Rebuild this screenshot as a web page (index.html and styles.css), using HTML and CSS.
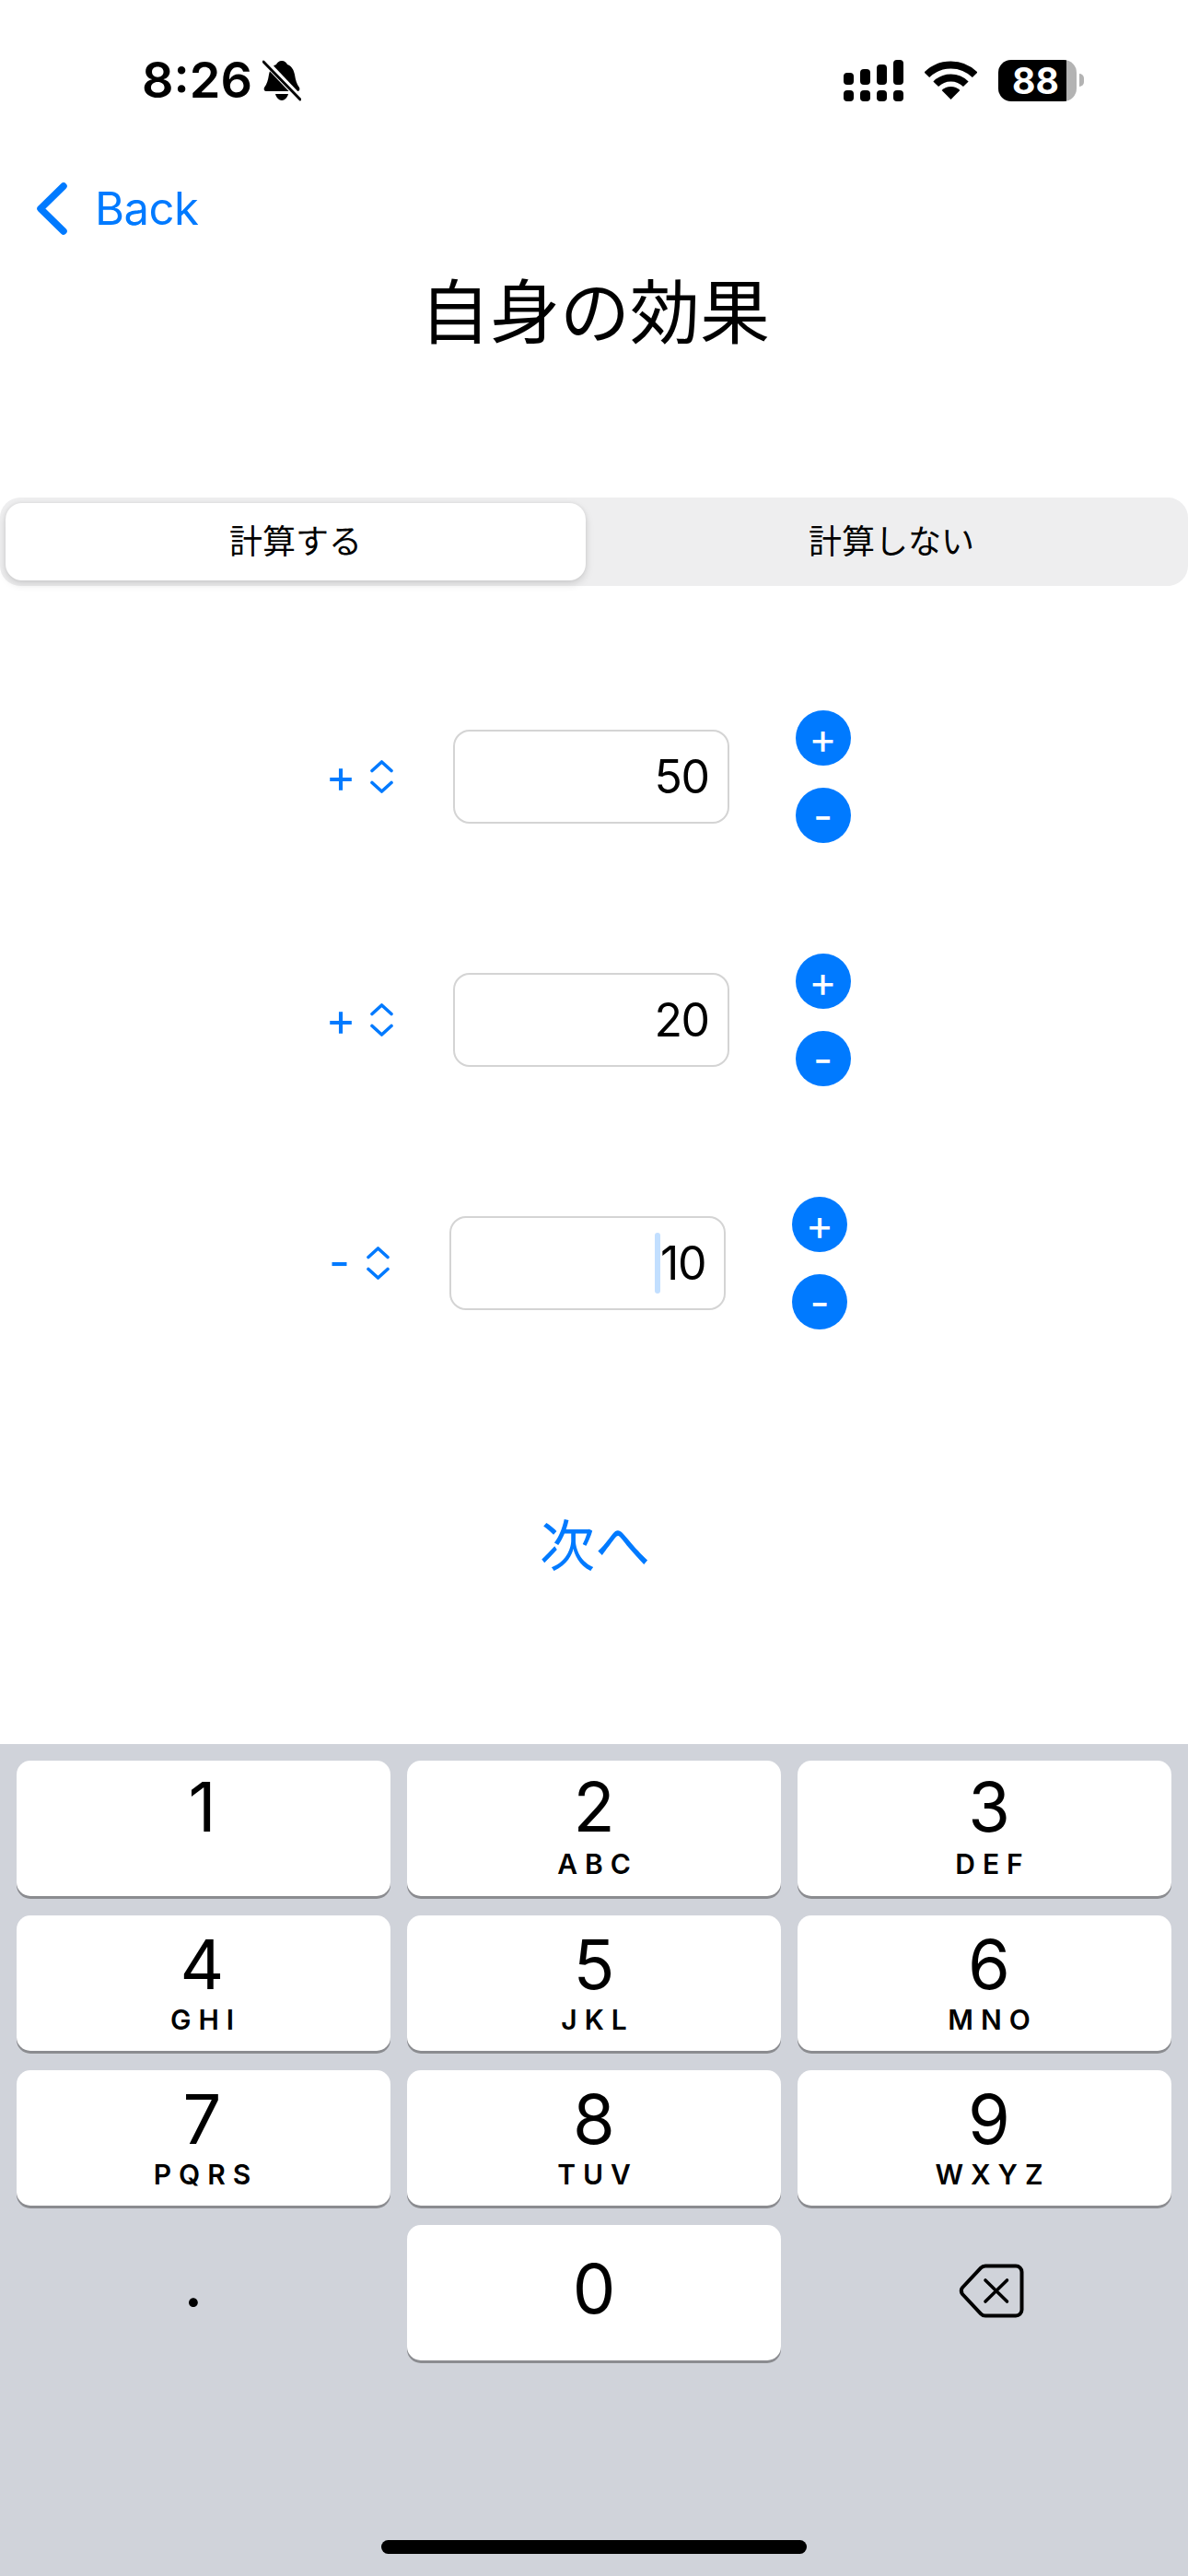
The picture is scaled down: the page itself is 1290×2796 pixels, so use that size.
FILE: index.html
```html
<!DOCTYPE html>
<html>

	<head lang="ja">
		<meta charset="UTF-8">
		<title>自身の効果</title>
		<link rel="stylesheet" href="styles.css">
	</head>

	<body>
		<div class="page">
			<div class="status">
				<div class="status-left">
					<span class="time">8:26</span>
					<svg class="bell" width="42" height="45" viewBox="0 0 42 45">
						<path d="M21 1c3 0 5 2 6 4 5 2 7 6 8 11 1 6 2 10 5 14 1 2 0 4-2 4H4c-2 0-3-2-2-4 3-4 4-8 5-14 1-5 3-9 8-11 1-2 3-4 6-4z" fill="#000"/>
						<path d="M14 37h14c-1 4-4 7-7 7s-6-3-7-7z" fill="#000"/>
						<path d="M1 0l41 43" stroke="#fff" stroke-width="7" fill="none"/>
						<path d="M1 2l40 41" stroke="#000" stroke-width="3" stroke-linecap="round" fill="none"/>
					</svg>
				</div>
				<div class="status-right">
					<svg width="65" height="45" viewBox="0 0 65 45">
						<rect x="0" y="14" width="11" height="13" rx="4"/>
						<rect x="18" y="10" width="11" height="17" rx="4"/>
						<rect x="36" y="5" width="11" height="22" rx="4"/>
						<rect x="54" y="0" width="11" height="27" rx="4"/>
						<rect x="0" y="33" width="11" height="12" rx="4"/>
						<rect x="18" y="33" width="11" height="12" rx="4"/>
						<rect x="36" y="33" width="11" height="12" rx="4"/>
						<rect x="54" y="33" width="11" height="12" rx="4"/>
					</svg>
					<svg class="wifi" width="57" height="43" viewBox="0 0 57 43">
						<path d="M2.3 15.3A37 37 0 0 1 54.7 15.3" stroke="#000" stroke-width="8" fill="none"/>
						<path d="M12.2 25.2A23 23 0 0 1 44.8 25.2" stroke="#000" stroke-width="8" fill="none"/>
						<path d="M28.5 42L18.6 32A14 14 0 0 1 38.4 32Z" fill="#000"/>
					</svg>
					<div class="battery">88</div>
					<div class="battery-nub"></div>
				</div>
			</div>

			<div class="nav">
				<svg width="33" height="57" viewBox="0 0 33 57">
					<path d="M29 4L4 28.5 29 53" stroke="#007aff" stroke-width="7.5" stroke-linecap="round" stroke-linejoin="round" fill="none"/>
				</svg>
				<span class="back">Back</span>
			</div>

			<div class="title">自身の効果</div>

			<div class="segment">
				<div class="seg-item seg-active">計算する</div>
				<div class="seg-item seg-other">計算しない</div>
			</div>

			<div class="rows">
				<div class="row">
					<span class="sign">+</span>
					<svg class="updown" width="25" height="36" viewBox="0 0 25 36">
						<path d="M2 11.5L12.5 2 23 11.5M2 24.5L12.5 34 23 24.5" stroke="#007aff" stroke-width="3.6" stroke-linecap="round" stroke-linejoin="round" fill="none"/>
					</svg>
					<div class="field"><span class="field-val">50</span></div>
					<div class="steppers">
						<div class="stepper">+</div>
						<div class="stepper">-</div>
					</div>
				</div>
				<div class="row">
					<span class="sign">+</span>
					<svg class="updown" width="25" height="36" viewBox="0 0 25 36">
						<path d="M2 11.5L12.5 2 23 11.5M2 24.5L12.5 34 23 24.5" stroke="#007aff" stroke-width="3.6" stroke-linecap="round" stroke-linejoin="round" fill="none"/>
					</svg>
					<div class="field"><span class="field-val">20</span></div>
					<div class="steppers">
						<div class="stepper">+</div>
						<div class="stepper">-</div>
					</div>
				</div>
				<div class="row">
					<span class="sign sign-minus">-</span>
					<svg class="updown" width="25" height="36" viewBox="0 0 25 36">
						<path d="M2 11.5L12.5 2 23 11.5M2 24.5L12.5 34 23 24.5" stroke="#007aff" stroke-width="3.6" stroke-linecap="round" stroke-linejoin="round" fill="none"/>
					</svg>
					<div class="field"><span class="caret"></span><span class="field-val">10</span></div>
					<div class="steppers">
						<div class="stepper">+</div>
						<div class="stepper">-</div>
					</div>
				</div>
			</div>

			<div class="next">次へ</div>

			<div class="keyboard">
				<div class="keys">
					<div class="key"><span class="num">1</span></div>
					<div class="key"><span class="num">2</span><span class="sub">ABC</span></div>
					<div class="key"><span class="num">3</span><span class="sub">DEF</span></div>
					<div class="key"><span class="num">4</span><span class="sub">GHI</span></div>
					<div class="key"><span class="num">5</span><span class="sub">JKL</span></div>
					<div class="key"><span class="num">6</span><span class="sub">MNO</span></div>
					<div class="key"><span class="num">7</span><span class="sub">PQRS</span></div>
					<div class="key"><span class="num">8</span><span class="sub">TUV</span></div>
					<div class="key"><span class="num">9</span><span class="sub">WXYZ</span></div>
					<div class="key key-plain key-dot"><span class="num">.</span></div>
					<div class="key key-zero"><span class="num">0</span></div>
					<div class="key key-plain key-del">
						<svg width="71" height="59" viewBox="0 0 71 59">
							<path d="M29 2.5H62a6.5 6.5 0 0 1 6.5 6.5V50a6.5 6.5 0 0 1-6.5 6.5H29a7 7 0 0 1-5-2.2L4 33a5.5 5.5 0 0 1 0-7L24 4.7a7 7 0 0 1 5-2.2z" stroke="#000" stroke-width="4" stroke-linejoin="round" fill="none"/>
							<path d="M29 18l23.5 23M52.5 18L29 41" stroke="#000" stroke-width="3.6" stroke-linecap="round" fill="none"/>
						</svg>
					</div>
				</div>
				<div class="home"></div>
			</div>
		</div>
	</body>

</html>
```
FILE: styles.css
```css
* {
	margin: 0;
	padding: 0;
	box-sizing: border-box;
}

body {
	background: #fff;
	font-family: Inter, "Noto Sans CJK JP", sans-serif;
	color: #000;
}

.page {
	width: 1290px;
	height: 2796px;
	display: flex;
	flex-direction: column;
	overflow: hidden;
}

.status {
	display: flex;
	justify-content: space-between;
	align-items: center;
	padding: 64px 113px 0 154px;
}

.status-left {
	display: flex;
	align-items: center;
	gap: 11px;
	height: 46px;
}

.time {
	font-size: 54px;
	font-weight: 600;
	line-height: 46px;
}

.status-right {
	display: flex;
	align-items: center;
	height: 46px;
}

.wifi {
	margin-left: 23px;
}

.battery {
	width: 85px;
	height: 45px;
	margin-left: 23px;
	padding-left: 15px;
	border-radius: 14px;
	background: linear-gradient(to right, #000 74px, #b3b3b3 74px);
	color: #fff;
	font-size: 39px;
	font-weight: 700;
	line-height: 45px;
}

.battery-nub {
	width: 5px;
	height: 14px;
	margin-left: 3px;
	border-radius: 0 7px 7px 0;
	background: #b3b3b3;
}

.nav {
	display: flex;
	align-items: center;
	gap: 30px;
	height: 57px;
	margin-top: 88px;
	padding-left: 40px;
}

.back {
	font-size: 49px;
	color: #007aff;
	line-height: 57px;
	letter-spacing: -0.5px;
}

.title {
	margin-top: 36px;
	font-size: 76px;
	line-height: 96px;
	text-align: center;
	padding-left: 2px;
}

.segment {
	display: flex;
	height: 96px;
	margin-top: 153px;
	padding: 6px;
	border-radius: 22px;
	background: #eeeeef;
}

.seg-item {
	font-size: 36px;
	line-height: 84px;
	text-align: center;
}

.seg-active {
	width: 630px;
	border-radius: 18px;
	background: #fff;
	box-shadow: 0 4px 10px rgba(0, 0, 0, 0.13), 0 0 4px rgba(0, 0, 0, 0.07);
}

.seg-other {
	flex: 1;
	padding-left: 16px;
}

.rows {
	display: flex;
	flex-direction: column;
	gap: 120px;
	margin-top: 135px;
}

.row {
	display: flex;
	align-items: center;
	justify-content: center;
	height: 144px;
	padding-right: 13px;
}

.sign {
	font-size: 50px;
	line-height: 60px;
	color: #007aff;
	margin-right: 15px;
	margin-bottom: 2px;
}

.sign-minus {
	padding-right: 3px;
}

.field {
	display: flex;
	align-items: center;
	justify-content: flex-end;
	width: 300px;
	height: 102px;
	margin-left: 65px;
	padding-right: 20px;
	border: 2px solid #d4d4d4;
	border-radius: 18px;
	background: #fff;
}

.field-val {
	font-size: 50px;
	line-height: 60px;
	letter-spacing: -1.5px;
}

.caret {
	width: 6px;
	height: 66px;
	border-radius: 3px;
	background: #c2dfff;
}

.steppers {
	display: flex;
	flex-direction: column;
	gap: 24px;
	margin-left: 72px;
}

.stepper {
	width: 60px;
	height: 60px;
	border-radius: 50%;
	background: #007aff;
	color: #fff;
	font-size: 46px;
	line-height: 60px;
	text-align: center;
}

.next {
	margin-top: 195px;
	font-size: 60px;
	line-height: 80px;
	text-align: center;
	color: #007aff;
	padding-left: 2px;
}

.keyboard {
	display: flex;
	flex-direction: column;
	align-items: center;
	height: 903px;
	margin-top: auto;
	padding-top: 18px;
	background: #d0d3da;
}

.keys {
	display: grid;
	grid-template-columns: repeat(3, 406px);
	grid-auto-rows: 147px;
	gap: 21px 18px;
}

.key {
	display: flex;
	flex-direction: column;
	align-items: center;
	padding-top: 5px;
	border-radius: 15px;
	background: #fff;
	box-shadow: 0 3px 0 #8b8c90;
}

/* digits are not quite centred in the outer columns */
.key:nth-child(3n+1) {
	padding-right: 3px;
}

.key:nth-child(3n) {
	padding-left: 10px;
}

.key:nth-child(n+4) .num {
	margin-top: 3px;
}

.key:nth-child(n+4) .sub {
	margin-top: 2px;
}

.num {
	font-size: 74px;
	line-height: 90px;
	height: 90px;
}

.sub {
	margin-top: 4px;
	font-size: 30px;
	font-weight: 600;
	line-height: 26px;
	letter-spacing: 8px;
	margin-right: -8px;
}

.key-plain {
	background: none;
	box-shadow: none;
}

.keys .key-zero .num {
	margin-top: 19px;
}

.keys .key-dot {
	padding-right: 22px;
}

.keys .key-dot .num {
	margin-top: 12px;
}

.keys .key-del {
	padding: 42px 0 0 14px;
}

.home {
	width: 462px;
	height: 15px;
	margin-top: auto;
	margin-bottom: 24px;
	border-radius: 8px;
	background: #000;
}
```
